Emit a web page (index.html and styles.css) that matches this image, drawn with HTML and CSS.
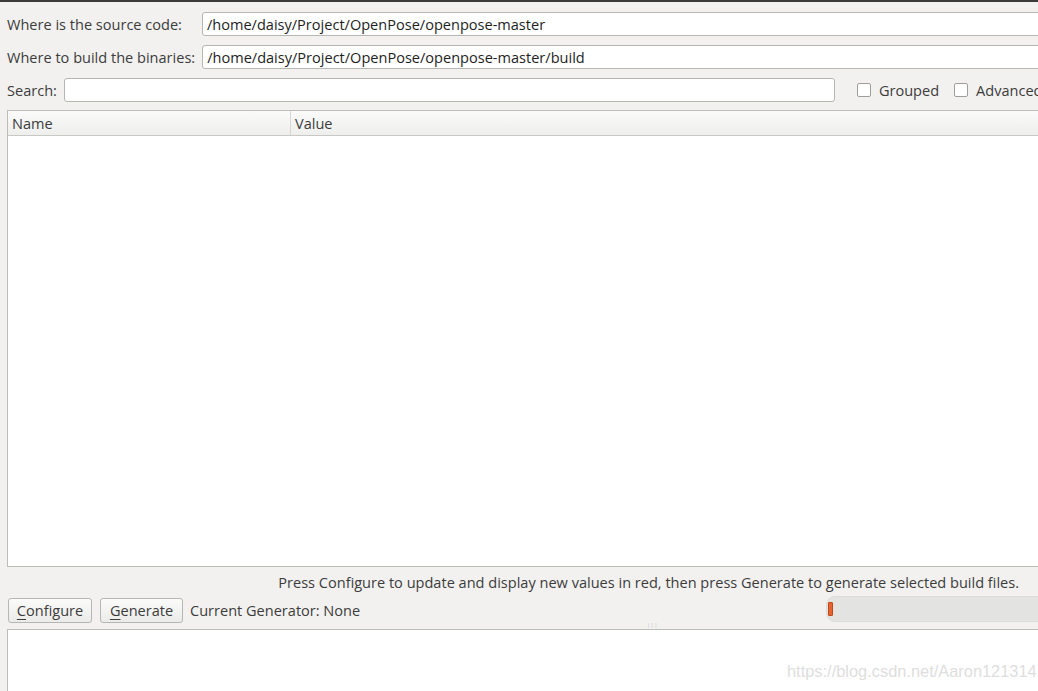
FILE: index.html
```html
<!DOCTYPE html>
<html lang="en">
<head>
  <meta charset="UTF-8" />
  <title>CMake</title>
  <link rel="stylesheet" href="styles.css">
</head>
<body>
  <div class="titlebar"></div>
  <div class="main">
    <div class="row">
      <label class="lbl">Where is the source code:</label>
      <div class="field path src">/home/daisy/Project/OpenPose/openpose-master</div>
    </div>
    <div class="row">
      <label class="lbl">Where to build the binaries:</label>
      <div class="field path bin">/home/daisy/Project/OpenPose/openpose-master/build</div>
    </div>
    <div class="row">
      <label class="lbl">Search:</label>
      <div class="field search"></div>
      <span class="check"><span class="box"></span>Grouped</span>
      <span class="check adv"><span class="box"></span>Advanced</span>
    </div>

    <div class="table">
      <div class="thead">
        <div class="th name">Name</div>
        <div class="th">Value</div>
      </div>
      <div class="tbody"></div>
    </div>

    <div class="status">Press Configure to update and display new values in red, then press Generate to generate selected build files.</div>

    <div class="actions">
      <button class="btn conf"><u>C</u>onfigure</button>
      <button class="btn gen"><u>G</u>enerate</button>
      <span class="gen-label">Current Generator: None</span>
      <div class="progress"><span class="chunk"></span></div>
    </div>
    <div class="grip">|||</div>

    <div class="output"></div>
  </div>
  <div class="watermark">https://blog.csdn.net/Aaron121314</div>
</body>
</html>
```

FILE: styles.css
```css
html, body {
  margin: 0;
  padding: 0;
  height: 100%;
  overflow: hidden;
}

body {
  background-color: #f2f1f0;
  color: #3c3c3c;
  font-family: 'Open Sans', 'DejaVu Sans', sans-serif;
  font-size: 14.55px;
  position: relative;
}

.titlebar {
  height: 2px;
  background-color: #3c3b37;
}

.main {
  width: 1080px;
  padding: 10px 0 0 7px;
  display: flex;
  flex-direction: column;
  height: 689px;
  box-sizing: border-box;
}

.row {
  display: flex;
  align-items: center;
  height: 24px;
  margin-bottom: 9px;
}

.lbl {
  white-space: nowrap;
  margin-right: 7px;
}

.field {
  height: 24px;
  box-sizing: border-box;
  background: #fff;
  border: 1px solid #b6b6b3;
  border-radius: 3px;
  padding: 0 4px;
  line-height: 22px;
  color: #1e1e1e;
}
.path {
  flex: 1;
}
.src {
  margin-left: 13px;
}
.search {
  width: 771px;
}

.check {
  display: flex;
  align-items: center;
  margin-left: 22px;
  white-space: nowrap;
}
.check.adv {
  margin-left: 15px;
}
.box {
  width: 12px;
  height: 12px;
  border: 1px solid #9e9e9b;
  border-radius: 2px;
  background: #fff;
  margin-right: 8px;
}

.table {
  margin-top: -1px;
  height: 455px;
  border: 1px solid #bdbdba;
  border-right: none;
  background: #fff;
  display: flex;
  flex-direction: column;
}
.thead {
  display: flex;
  height: 24px;
  border-bottom: 1px solid #c8c8c5;
  background: linear-gradient(#fbfbfb, #eeeeec);
}
.th {
  line-height: 24px;
  padding-left: 4px;
}
.th.name {
  width: 278px;
  border-right: 1px solid #d6d6d3;
}

.status {
  width: 1012px;
  text-align: right;
  height: 24px;
  line-height: 26px;
  margin-top: 2px;
}

.actions {
  display: flex;
  align-items: center;
  height: 26px;
  margin-top: 4px;
}
.btn {
  font: inherit;
  color: #3c3c3c;
  height: 25px;
  padding: 0;
  border: 1px solid #b6b6b3;
  border-radius: 3px;
  background: linear-gradient(#fbfbfa, #ebebe9);
  margin-left: 1px;
}
.btn u {
  text-decoration-thickness: 1px;
  text-underline-offset: 3px;
}
.conf {
  width: 84px;
}
.gen {
  width: 83px;
  margin-left: 8px;
}
.gen-label {
  margin-left: 7px;
  width: 636px;
}
.progress {
  flex: 1;
  height: 24px;
  margin-top: -2px;
  border-radius: 9px;
  background: #e3e3e1;
  border: 1px solid #dcdcda;
  display: flex;
  align-items: center;
}
.chunk {
  width: 3px;
  height: 12px;
  margin-left: 1px;
  background: #e9632f;
  border: 1px solid #c04a1e;
  border-radius: 1px;
}

.grip {
  height: 6px;
  font-size: 5px;
  line-height: 4px;
  color: #bdbdba;
  padding-left: 640px;
  letter-spacing: 1px;
}

.output {
  flex: 1;
  background: #fff;
  border: 1px solid #bdbdba;
  border-right: none;
  border-bottom: none;
}

.watermark {
  position: absolute;
  left: 787px;
  top: 662px;
  font-family: 'Liberation Sans', Arial, sans-serif;
  font-size: 16.4px;
  color: #dedede;
}
```
